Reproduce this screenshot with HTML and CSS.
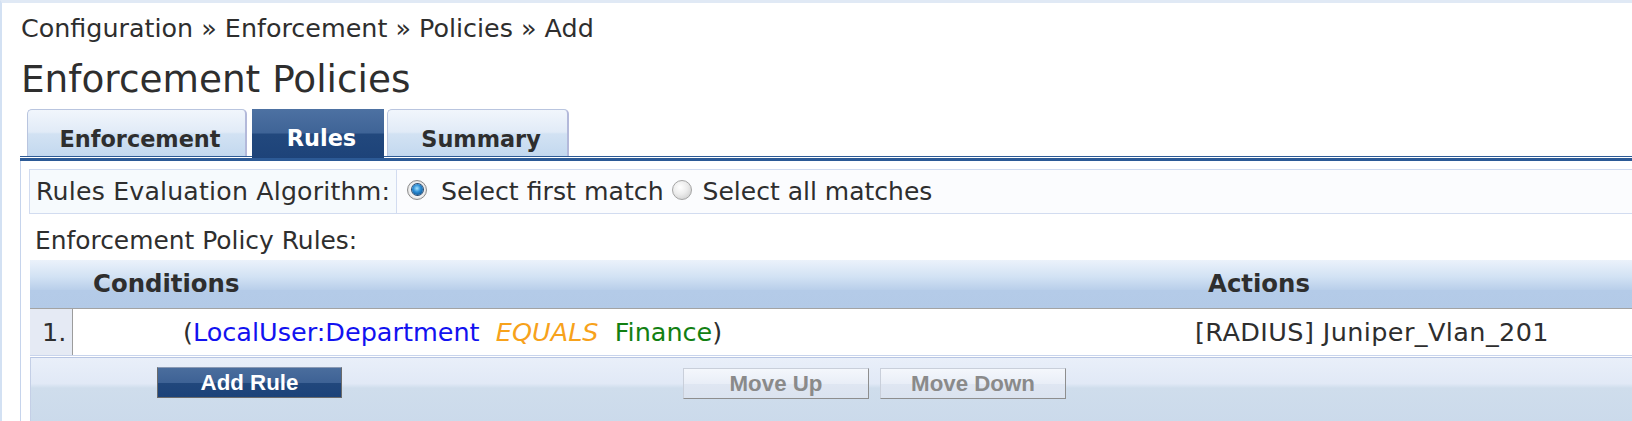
FILE: index.html
```html
<!DOCTYPE html>
<html>
<head>
<meta charset="utf-8">
<title>Enforcement Policies</title>
<link rel="stylesheet" href="styles.css">
</head>
<body>
<div class="page">
  <div class="breadcrumb">Configuration » Enforcement » Policies » Add</div>
  <h1 class="title">Enforcement Policies</h1>
  <div class="tabs">
    <div class="tab tab-enf">Enforcement</div>
    <div class="tab tab-active tab-rules">Rules</div>
    <div class="tab tab-sum">Summary</div>
  </div>
  <div class="tabline"></div>
  <div class="panel">
    <div class="algo">
      <div class="algo-label">Rules Evaluation Algorithm:</div>
      <div class="algo-value">
        <span class="radio radio-on"><span class="dot"></span></span><span class="opt">Select first match</span><span class="radio radio-off"></span><span class="opt">Select all matches</span>
      </div>
    </div>
    <div class="section-label">Enforcement Policy Rules:</div>
    <div class="rules">
      <div class="rules-head">
        <div class="h-num"></div>
        <div class="h-cond">Conditions</div>
        <div class="h-act">Actions</div>
      </div>
      <div class="rules-row">
        <div class="c-num">1.</div>
        <div class="c-cond">(<span class="attr">LocalUser:Department</span>&nbsp; <span class="op">EQUALS</span>&nbsp; <span class="val">Finance</span>)</div>
        <div class="c-act">[RADIUS] Juniper_Vlan_201</div>
      </div>
      <div class="rules-foot">
        <button class="btn btn-primary btn-add">Add Rule</button>
        <button class="btn btn-plain btn-up">Move Up</button>
        <button class="btn btn-plain">Move Down</button>
      </div>
    </div>
  </div>
</div>
</body>
</html>
```

FILE: styles.css
```css
html, body {
  margin: 0;
  padding: 0;
  background: #ffffff;
}
body {
  font-family: "DejaVu Sans", Verdana, sans-serif;
  color: #2e2e2e;
  overflow: hidden;
}
.page {
  box-sizing: border-box;
  height: 421px;
  overflow: hidden;
  border-top: 3px solid #e0e9f5;
  border-left: 2px solid #d3e1f3;
}
.breadcrumb {
  padding: 10px 0 0 19px;
  font-size: 25.4px;
  line-height: 30px;
  white-space: nowrap;
}
.title {
  margin: 14px 0 0 19px;
  font-size: 37.4px;
  font-weight: normal;
  line-height: 44px;
  white-space: nowrap;
}
.tabs {
  display: flex;
  align-items: flex-end;
  height: 47px;
  margin: 8px 0 0 18px;
  padding-left: 7px;
  border-bottom: 1px solid #2c5a96;
}
.tab {
  box-sizing: border-box;
  height: 47px;
  padding-top: 16px;
  font-size: 22.4px;
  font-weight: bold;
  line-height: 26px;
  text-align: center;
  color: #2e2e2e;
  white-space: nowrap;
}
.tab-enf,
.tab-sum {
  border: 1px solid #b9c5df;
  border-right: 2px solid #b3b9da;
  border-bottom: none;
  border-radius: 5px 5px 0 0;
  background: linear-gradient(to bottom, #f1f6fc 0%, #e1ebf7 48%, #d2e2f3 52%, #c3d8ef 100%);
  padding-left: 7px;
}
.tab-enf {
  width: 220px;
  margin-right: 5px;
}
.tab-rules {
  width: 132px;
  margin-right: 3px;
  padding-left: 7px;
}
.tab-sum {
  width: 182px;
}
.tab-active {
  position: relative;
  z-index: 1;
  height: 49px;
  margin-bottom: -2px;
  padding-top: 16px;
  color: #ffffff;
  background: linear-gradient(to bottom, #4d71a2 0%, #3f6497 48%, #22487d 52%, #1d4379 100%);
}
.tabline {
  height: 3px;
  margin-left: 18px;
  border-top: 1px solid #ffffff;
  background: #2c5a96;
}
.panel {
  margin-left: 18px;
  border-left: 1px solid #c6d4ec;
  padding: 8px 0 0 8px;
  height: 252px;
}
.algo {
  display: flex;
  height: 45px;
  box-sizing: border-box;
  border-top: 1px solid #d2dcf0;
  border-bottom: 1px solid #d2dcf0;
  font-size: 25.2px;
  line-height: 43px;
  white-space: nowrap;
}
.algo-label {
  box-sizing: border-box;
  width: 368px;
  padding-left: 6px;
  letter-spacing: 0.2px;
  border-left: 1px solid #d2dcf0;
  border-right: 1px solid #d2dcf0;
  background: #f6fafd;
}
.algo-value {
  flex: 1;
  display: flex;
  align-items: center;
  padding-left: 10px;
  background: #fbfcfe;
}
.radio {
  box-sizing: border-box;
  width: 20px;
  height: 20px;
  border-radius: 50%;
  flex: none;
  display: flex;
  align-items: center;
  justify-content: center;
  margin-top: -4px;
}
.radio-on {
  border: 1px solid #8c8c8c;
  background: radial-gradient(circle at 50% 50%, #ffffff 0%, #f2f2f2 55%, #c4c4c4 100%);
  margin-right: 14px;
}
.radio-on .dot {
  width: 11px;
  height: 11px;
  border-radius: 50%;
  background: radial-gradient(circle at 45% 40%, #a6e4ff 0%, #2d8ed6 40%, #0b4f8c 85%, #093a68 100%);
  box-shadow: 0 0 0 1px #2a4b70;
}
.radio-off {
  border: 1px solid #a4a4a4;
  background: radial-gradient(circle at 40% 35%, #ffffff 0%, #ececec 45%, #c4c4c4 100%);
  margin: -4px 11px 0 8px;
}
.opt {
  display: block;
}
.opt:last-child {
  font-size: 25px;
}
.section-label {
  box-sizing: border-box;
  height: 46px;
  padding: 8px 0 0 6px;
  font-size: 24.9px;
  line-height: 37px;
  white-space: nowrap;
}
.rules {
  margin-left: 1px;
  white-space: nowrap;
}
.rules-head {
  display: grid;
  grid-template-columns: 43px 1107px 1fr;
  height: 49px;
  box-sizing: border-box;
  border-bottom: 1px solid #a3a3a3;
  background: linear-gradient(to bottom, #ebf2fb 0%, #d2e2f4 35%, #b9cfea 62%, #b4cbe8 63%, #b3cae7 100%);
  font-size: 24.4px;
  font-weight: bold;
  line-height: 48px;
}
.h-cond {
  padding-left: 20px;
}
.h-act {
  padding-left: 28px;
}
.rules-row {
  display: grid;
  grid-template-columns: 43px 1107px 1fr;
  height: 47px;
  box-sizing: border-box;
  border-bottom: 1px solid #c8d4ec;
  font-size: 25.5px;
  line-height: 46px;
}
.c-num {
  box-sizing: border-box;
  padding-left: 12px;
  background: #e5eaf4;
  border-right: 1px solid #9c9c9c;
}
.c-cond {
  padding-left: 110px;
  background: #ffffff;
}
.c-act {
  padding-left: 15px;
  letter-spacing: 0.4px;
  background: #ffffff;
}
.attr {
  color: #1212f0;
}
.op {
  color: #f7a21b;
  font-style: italic;
}
.val {
  color: #128012;
}
.rules-foot {
  display: flex;
  align-items: flex-start;
  height: 70px;
  margin-top: 1px;
  padding: 9px 0 0 126px;
  border-top: 1px solid #b7c5e3;
  border-left: 1px solid #c4cfe6;
  background: linear-gradient(to bottom, #e9eff9 0%, #e1e9f6 40%, #cfddec 47%, #cbdaeb 100%);
  background-size: 100% 64px;
  background-repeat: no-repeat;
  background-color: #cbdaeb;
}
.btn {
  box-sizing: border-box;
  height: 31px;
  padding: 0;
  font-family: "Liberation Sans", Arial, sans-serif;
  font-size: 22.3px;
  font-weight: bold;
  line-height: 29px;
  text-align: center;
}
.btn-primary {
  width: 185px;
  color: #ffffff;
  border: 1px solid #6b6b6b;
  border-top-color: #8a9ab4;
  background: linear-gradient(to bottom, #4a6d9d 0%, #3e6295 50%, #21477c 52%, #1c4278 100%);
}
.btn-add {
  margin-right: 341px;
}
.btn-plain {
  width: 186px;
  margin-top: 1px;
  color: #8a8a8a;
  border: 1px solid #c9cfda;
  border-right-color: #8e8e8e;
  border-bottom-color: #8e8e8e;
  background: linear-gradient(to bottom, #f4f7fc 0%, #e9eef7 50%, #dfe6f2 52%, #dbe3ef 100%);
}
.btn-up {
  margin-right: 11px;
}
```
